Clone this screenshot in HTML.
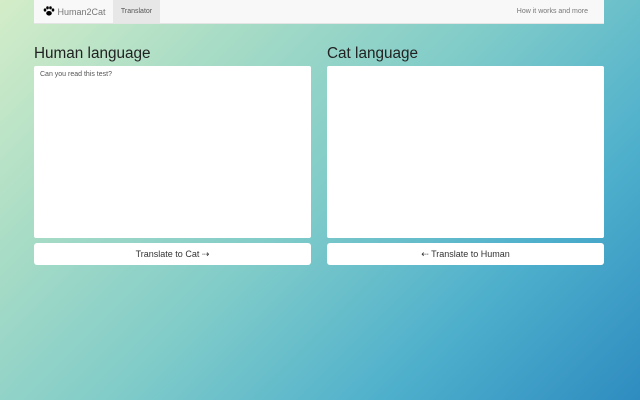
<!DOCTYPE html>
<html><head><style>
body{margin:0;width:640px;height:400px;overflow:hidden;font-family:"Liberation Sans",sans-serif;
background:linear-gradient(135deg,#d4edc8 0%,#a8dcc6 25%,#7fcbc9 50%,#4fb0cc 75%,#2f8cc0 100%);position:relative}
.nav{position:absolute;left:34px;top:0;width:570px;height:23px;background:#f8f8f8;border-bottom:1px solid #e4e4e4}
.brand{position:absolute;left:9px;top:6px;font-size:9px;color:#777}
.tab{position:absolute;left:79px;top:0;width:47px;height:23px;background:#e7e7e7;font-size:7px;color:#555;text-align:center;line-height:24px}
.right{position:absolute;right:16px;top:8px;font-size:7px;color:#777}
h2{position:absolute;top:45px;margin:0;font-weight:normal;font-size:15.3px;color:#222}
.ta{position:absolute;top:66px;width:277px;height:172px;background:#fff;border-radius:2px}
.btn{position:absolute;top:243px;width:277px;height:22px;background:#fff;border-radius:3px;font-size:9px;color:#333;text-align:center;line-height:23px}
</style></head><body>
<div class="nav"><div class="brand"><svg width="12" height="10" viewBox="0 0 12 10" style="vertical-align:-1px"><ellipse cx="2" cy="4" rx="1.3" ry="1.6"/><ellipse cx="4.5" cy="1.8" rx="1.3" ry="1.6"/><ellipse cx="7.5" cy="1.8" rx="1.3" ry="1.6"/><ellipse cx="10" cy="4" rx="1.3" ry="1.6"/><ellipse cx="6" cy="7.3" rx="2.8" ry="2.3"/></svg> Human2Cat</div><div class="tab">Translator</div><div class="right">How it works and more</div></div>
<h2 style="left:34px">Human language</h2>
<h2 style="left:327px">Cat language</h2>
<div class="ta" style="left:34px"><div style="font-size:7px;color:#555;padding:5px 6px">Can you read this test?</div></div>
<div class="ta" style="left:327px"></div>
<div class="btn" style="left:34px">Translate to Cat ⇢</div>
<div class="btn" style="left:327px">⇠ Translate to Human</div>
</body></html>
